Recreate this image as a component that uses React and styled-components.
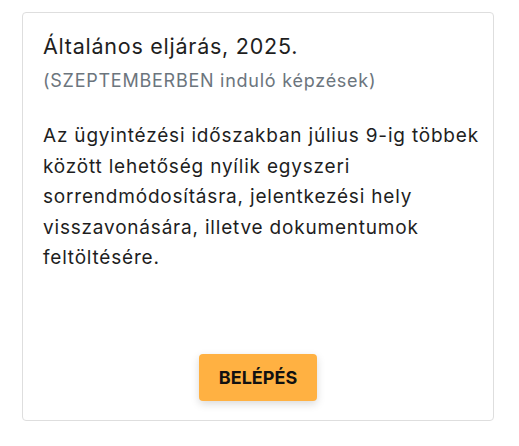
import React from "react";
import styled, { createGlobalStyle } from "styled-components";

const GlobalStyle = createGlobalStyle`
  body {
    margin: 0;
    background: #ffffff;
    font-family: "Inter", "Noto Sans", sans-serif;
    color: #1e1e1e;
  }
`;

const Page = styled.div`
  padding: 12px 0 0 22px;
`;

const Card = styled.div`
  box-sizing: border-box;
  width: 472px;
  height: 409px;
  border: 1px solid #dedede;
  border-radius: 4px;
  display: flex;
  flex-direction: column;
  padding: 19px 20px;
`;

const Title = styled.h2`
  margin: 0;
  font-size: 21.5px;
  font-weight: 400;
  line-height: 28px;
  letter-spacing: 0.75px;
  color: #1e1e1e;
`;

const Subtitle = styled.div`
  margin-top: 9px;
  font-size: 18px;
  line-height: 24px;
  letter-spacing: 0.75px;
  color: #6c757d;
`;

const Body = styled.p`
  margin: 28px -14px 0 0;
  font-size: 19px;
  line-height: 30.5px;
  letter-spacing: 0.8px;
  color: #1e1e1e;
`;

const Button = styled.button`
  margin: auto auto 0;
  width: 118px;
  height: 47px;
  border: none;
  border-radius: 4px;
  background: #ffb142;
  color: #111;
  font-family: "Inter", "Noto Sans", sans-serif;
  font-size: 18px;
  font-weight: 700;
  box-shadow: 0 3px 8px rgba(0, 0, 0, 0.15);
  cursor: pointer;
`;

export default function App() {
  return (
    <>
      <GlobalStyle />
      <Page>
        <Card>
          <Title>Általános eljárás, 2025.</Title>
          <Subtitle>(SZEPTEMBERBEN induló képzések)</Subtitle>
          <Body>
            Az ügyintézési időszakban július 9-ig többek között lehetőség
            nyílik egyszeri sorrendmódosításra, jelentkezési hely
            visszavonására, illetve dokumentumok feltöltésére.
          </Body>
          <Button>BELÉPÉS</Button>
        </Card>
      </Page>
    </>
  );
}
